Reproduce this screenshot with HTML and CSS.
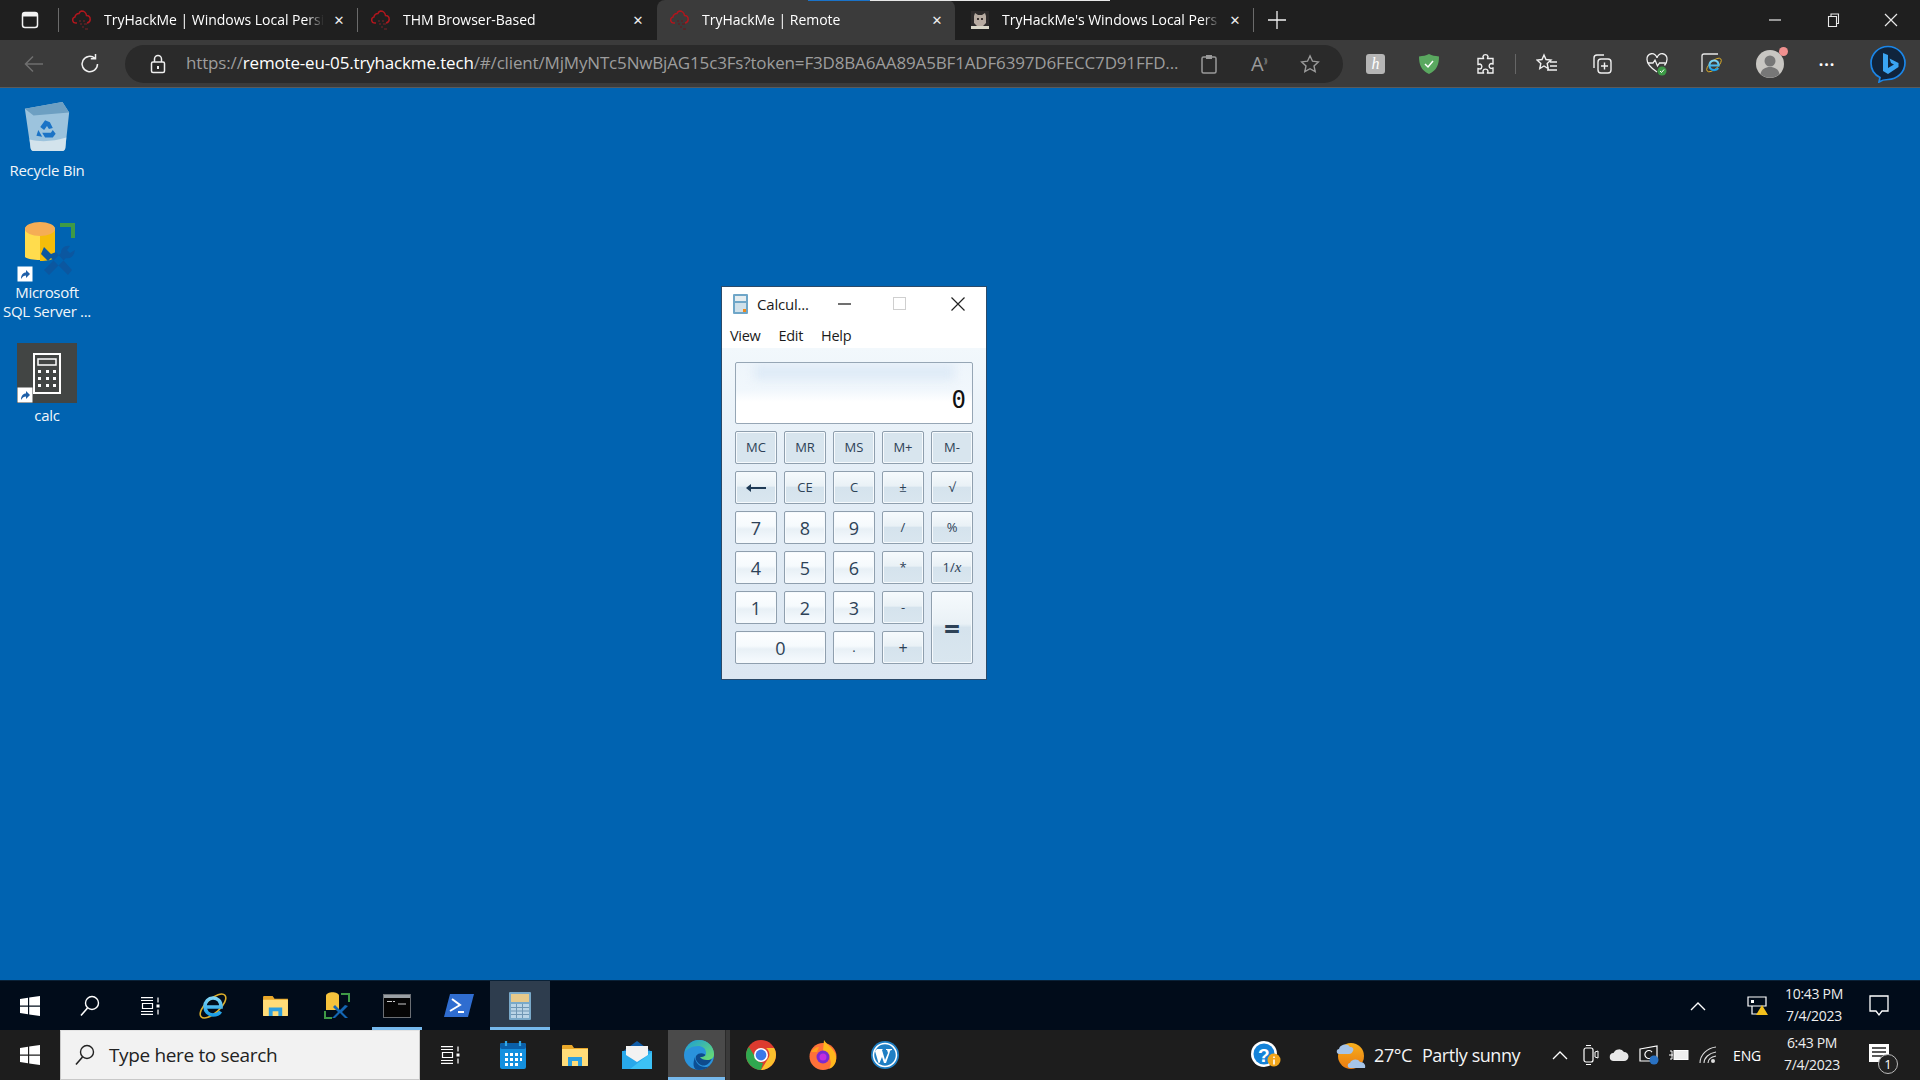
FILE: index.html
```html
<!DOCTYPE html>
<html lang="en">
<head>
<meta charset="utf-8">
<title>TryHackMe | Remote</title>
<link rel="stylesheet" href="styles.css">
</head>
<body>
<svg class="defs" width="0" height="0" aria-hidden="true">
  <defs>
    <linearGradient id="edgeTop" x1="0" y1="0" x2="1" y2="1"><stop offset="0" stop-color="#1a9cd8"/><stop offset="1" stop-color="#6fe06a"/></linearGradient>
    <linearGradient id="sunG" x1="0" y1="0" x2="0" y2="1"><stop offset="0" stop-color="#f7b01e"/><stop offset="1" stop-color="#ea7a10"/></linearGradient>
    <linearGradient id="ieG" x1="0" y1="0" x2="0" y2="1"><stop offset="0" stop-color="#7fd6f7"/><stop offset="1" stop-color="#1b9ee6"/></linearGradient>
    <symbol id="thm" viewBox="0 0 20 20">
      <path d="M5 13H3.500a3 3 0 0 1-.6-5.900A4.500 4.500 0 0 1 7 3.500 4 4 0 0 1 9.500 1a5 5 0 0 1 5 4.500 3.800 3.800 0 0 1 3.700 3.700A3.800 3.800 0 0 1 15 13" fill="none" stroke="#b0161d" stroke-width="1.500"/>
      <path d="M7 11h2M11 11h2M8 14h2M12 14h3M10 17h2M13 19h3" stroke="#5c2226" stroke-width="1.400"/>
    </symbol>
    <symbol id="winlogo" viewBox="0 0 20 20">
      <path d="M0 3l8-1.200V9.500H0zM9.200 1.600 20 0v9.500H9.200zM0 10.700h8v7.500l-8-1.200zM9.200 10.700H20V20L9.200 18.400z" fill="#fff"/>
    </symbol>
    <symbol id="taskview" viewBox="0 0 20 18">
      <path d="M1 .6h12M1 3.500h12M2.500 6.500h10v5h-10zM1 14.500h12M1 17.400h12M18 .6v4.800M18 12.500v5" fill="none" stroke="#fff" stroke-width="1.200"/>
      <rect x="16.500" y="7.500" width="3" height="3" fill="#fff"/>
    </symbol>
    <symbol id="folder" viewBox="0 0 28 23">
      <path d="M1 2a1 1 0 0 1 1-1h9l2 3h14v18H1z" fill="#e9a82a"/>
      <path d="M1 5h26v16a1 1 0 0 1-1 1H2a1 1 0 0 1-1-1z" fill="#ffdc78"/>
      <path d="M7 22v-9h14v9h-4v-5h-6v5z" fill="#2b9fe0"/>
    </symbol>
    <symbol id="ie" viewBox="0 0 28 28">
      <ellipse cx="14" cy="14" rx="16" ry="7" transform="rotate(-42 14 14)" fill="none" stroke="#dfb02a" stroke-width="1.600"/>
      <path d="M7 15h15c0-6-3.500-9-8-9s-8 3.500-8 8.500S9.500 23 14 23c3 0 6-1.200 7.500-3.500" fill="none" stroke="url(#ieG)" stroke-width="3.600"/>
    </symbol>
    <symbol id="shortcut" viewBox="0 0 16 16">
      <rect x=".5" y=".5" width="15" height="15" fill="#fff"/>
      <path d="M4 13c0-4 2-6.500 5-6.500V4l4 4-4 4V9.500c-2 0-3.500 1-5 3.500z" fill="#1d5fa8"/>
    </symbol>
  </defs>
</svg>

<header class="tabbar">
  <button class="chrome-btn sidebar-btn" aria-label="Tab actions">
    <svg width="18" height="18" viewBox="0 0 18 18"><rect x="1.500" y="1.500" width="15" height="15" rx="2.500" fill="none" stroke="#f2f2f2" stroke-width="1.500"/><path d="M2 2h14v3.500H2z" fill="#f2f2f2"/></svg>
  </button>
  <span class="tab-sep"></span>
  <div class="tab">
    <svg class="favicon"><use href="#thm"/></svg>
    <span class="tab-title">TryHackMe | Windows Local Persi</span>
    <span class="tab-close">✕</span>
  </div>
  <span class="tab-sep"></span>
  <div class="tab">
    <svg class="favicon"><use href="#thm"/></svg>
    <span class="tab-title">THM Browser-Based</span>
    <span class="tab-close">✕</span>
  </div>
  <div class="tab tab-active">
    <svg class="favicon"><use href="#thm"/></svg>
    <span class="tab-title">TryHackMe | Remote</span>
    <span class="tab-close">✕</span>
  </div>
  <div class="tab tab-last">
    <svg class="favicon favicon-cat" viewBox="0 0 18 18"><rect width="18" height="18" fill="#2d2a2a"/><path d="M3 5l1-3 3 2h4l3-2 1 3v7l-3 3H6l-3-3z" fill="#b7aaa0"/><path d="M6 7h2v2H6zM10 7h2v2h-2z" fill="#3b3230"/><path d="M0 15h18v3H0z" fill="#d9d6c8"/></svg>
    <span class="tab-title">TryHackMe's Windows Local Pers</span>
    <span class="tab-close">✕</span>
  </div>
  <span class="tab-sep"></span>
  <button class="chrome-btn new-tab" aria-label="New tab">
    <svg width="18" height="18" viewBox="0 0 18 18"><path d="M9 0v18M0 9h18" stroke="#f2f2f2" stroke-width="1.300"/></svg>
  </button>
  <div class="win-controls">
    <svg width="14" height="14" viewBox="0 0 14 14"><path d="M1 7h12" stroke="#e8e8e8" stroke-width="1.200"/></svg>
    <svg width="14" height="14" viewBox="0 0 14 14"><path d="M2.500 3.500h8v10h-8zM5 3.500V1h7.500v9.500h-2" fill="none" stroke="#e8e8e8" stroke-width="1.100"/></svg>
    <svg width="14" height="14" viewBox="0 0 14 14"><path d="M1 1l12 12M13 1 1 13" stroke="#e8e8e8" stroke-width="1.200"/></svg>
  </div>
  <div class="remote-strip"><span class="strip-blue"></span><span class="strip-white"></span></div>
</header>

<nav class="toolbar">
  <svg class="nav-back" width="20" height="20" viewBox="0 0 20 20"><path d="M19 10H2M9 2.500 1.500 10 9 17.500" fill="none" stroke="#6f6f6f" stroke-width="1.500"/></svg>
  <svg class="nav-reload" width="22" height="22" viewBox="0 0 22 22"><path d="M18.500 11a7.700 7.700 0 1 1-2.600-5.800M16.500 1v4.700h-4.700" fill="none" stroke="#f0f0f0" stroke-width="1.500"/></svg>
  <div class="address">
    <svg class="lock" width="16" height="20" viewBox="0 0 16 20"><rect x="1.500" y="8" width="13" height="10.500" rx="1.500" fill="none" stroke="#f0f0f0" stroke-width="1.500"/><path d="M4.500 8V5a3.500 3.500 0 0 1 7 0v3" fill="none" stroke="#f0f0f0" stroke-width="1.500"/><rect x="7" y="12" width="2" height="3" fill="#f0f0f0"/></svg>
    <span class="url"><span class="dim">https://</span><span class="host">remote-eu-05.tryhackme.tech</span><span class="dim">/#/client/MjMyNTc5NwBjAG15c3Fs?token=F3D8BA6AA89A5BF1ADF6397D6FECC7D91FFD...</span></span>
    <div class="addr-icons">
      <svg width="18" height="20" viewBox="0 0 18 20"><rect x="2" y="3" width="14" height="16" rx="1.500" fill="none" stroke="#9a9a9a" stroke-width="1.500"/><rect x="6" y="1" width="6" height="4" fill="#9a9a9a"/></svg>
      <span class="read-aloud">A<sup>))</sup></span>
      <svg width="20" height="20" viewBox="0 0 20 20"><path d="M10 1.800l2.500 5.400 5.800.7-4.300 4 1.200 5.800-5.200-3-5.200 3 1.200-5.800-4.300-4 5.800-.7z" fill="none" stroke="#9a9a9a" stroke-width="1.400"/></svg>
    </div>
  </div>
  <div class="ext-icons">
    <span class="ext-k">h</span>
    <svg class="ext-shield" width="20" height="20" viewBox="0 0 20 20"><path d="M10 0c3 1.500 6 2 10 2.500C20 10 18 16.500 10 20 2 16.500 0 10 0 2.500 4 2 7 1.500 10 0z" fill="#5aa860"/><path d="M6 10l3 3 5-6" fill="none" stroke="#fff" stroke-width="1.500"/></svg>
    <svg class="ext-puzzle" width="24" height="22" viewBox="0 0 24 22"><path d="M10 3.500a2.600 2.600 0 0 1 5 0c0 1-.6 1.500-.5 2H20v5.500c-.5 0-1-.6-2-.5a2.600 2.600 0 0 0 0 5c1 0 1.500-.5 2-.5V20h-5.500c0-.6.500-1 .5-2a2.600 2.600 0 0 0-5 0c0 1 .5 1.400.5 2H5v-4.500c.6 0 1 .5 2 .5a2.600 2.600 0 0 0 0-5c-1 0-1.400.5-2 .5V5.500h5.500c0-.5-.5-1-.5-2z" fill="none" stroke="#f0f0f0" stroke-width="1.400"/></svg>
    <span class="tool-sep"></span>
    <svg class="ext-fav" width="22" height="22" viewBox="0 0 22 22"><path d="M8 2l2 4.500 5 .5-3.800 3.500 1 5L8 13l-4.200 2.500 1-5L1 7l5-.5zM14 9h7M14 13h7M11 17h10" fill="none" stroke="#f0f0f0" stroke-width="1.400"/></svg>
    <svg width="22" height="22" viewBox="0 0 22 22"><path d="M3 15V5a3 3 0 0 1 3-3h7" fill="none" stroke="#f0f0f0" stroke-width="1.400"/><rect x="7" y="6" width="13" height="14" rx="3" fill="none" stroke="#f0f0f0" stroke-width="1.400"/><path d="M13.500 9.500v7M10 13h7" stroke="#f0f0f0" stroke-width="1.400"/></svg>
    <svg width="22" height="24" viewBox="0 0 22 24"><path d="M11 20C5 16 1 12 1 7.500a4.800 4.800 0 0 1 10-1.500 4.800 4.800 0 0 1 10 1.500c0 2-1 4-2.500 6" fill="none" stroke="#f0f0f0" stroke-width="1.300"/><path d="M2 11h5l2-3 2.500 6 2-3h6" fill="none" stroke="#f0f0f0" stroke-width="1.300"/><circle cx="16" cy="19" r="4.500" fill="#3c9a46"/><path d="M14 19l1.500 1.500L18 17.500" fill="none" stroke="#fff"/></svg>
    <span class="ext-ie">
      <svg width="20" height="22" viewBox="0 0 20 22"><path d="M1 19V3a2 2 0 0 1 2-2h14" fill="none" stroke="#e8e8e8" stroke-width="1.300"/></svg>
      <svg class="ext-ie-e" width="16" height="16"><use href="#ie"/></svg>
    </span>
    <span class="profile"><svg width="28" height="28" viewBox="0 0 28 28"><circle cx="14" cy="14" r="14" fill="#c8c6c2"/><circle cx="14" cy="11" r="5.500" fill="#777"/><path d="M4.500 24c1-5 5-7 9.500-7s8.500 2 9.500 7c-5 5-14 5-19 0z" fill="#777"/></svg><span class="profile-dot"></span></span>
    <span class="more">···</span>
    <svg class="bing" width="38" height="38" viewBox="0 0 38 38"><path d="M19 1.500c9.500 0 17 7.500 17 16.500S28 34.500 19 34.500c-3 0-6 .5-9 2.500l1-4.500C5 29.500 2 24.500 2 18 2 9 9.500 1.500 19 1.500z" fill="#10243c" stroke="#1b86e8" stroke-width="1.700"/><path d="M14 8l5 2v13l6-3.500-3-1.500-1.500-4.500 9 4.500v4L19 29l-5-3z" fill="#3aa5f3"/></svg>
  </div>
</nav>

<main class="desktop">
  <div class="desk-icon icon-bin">
    <svg width="48" height="52" viewBox="0 0 48 54"><path d="M1 8 40 1l7 11-4 37a4 4 0 0 1-4 3H11a4 4 0 0 1-4-3z" fill="#9cc3dd"/><path d="M1 8 40 1l7 11-37 3z" fill="#6d9fc2"/><path d="M6 40c12 3 25 2 38-2l-1 11a4 4 0 0 1-4 3H11a4 4 0 0 1-4-3z" fill="#d3e3ec"/><path d="M17 27l5-7 5 2 3 6-4 1-2-3-3 4zM19 33h9l2-3 3 4-3 4h-8zM15 30l4 7-6-1z" fill="#1b73c6"/></svg>
    <span class="desk-label">Recycle Bin</span>
  </div>
  <div class="desk-icon icon-sql">
    <span class="art">
      <svg width="60" height="60" viewBox="0 0 60 60"><path d="M8 7c0-7 30-7 30 0v28c-4 4-26 4-30 0z" fill="#ffdc4d"/><path d="M23 6v33c7 0 13-1 15-4V7c0-2-8-3-15-1z" fill="#f5bd0a"/><ellipse cx="23" cy="7" rx="15" ry="7" fill="#f5ad55"/><path d="M43 1h15v15h-4V5H43z" fill="#3f9a46"/><path d="M27 25l7 7 5-2 16 18-4 5-17-17-3 3-7-7zM53 24c-5-1-9 2-9 7L27 48l5 5 17-17c5 1 8-2 9-8l-5 3-3-3z" fill="#0b57a0"/></svg>
      <svg class="short"><use href="#shortcut"/></svg>
    </span>
    <span class="desk-label">Microsoft<br>SQL Server ...</span>
  </div>
  <div class="desk-icon icon-calc">
    <span class="art art-calc">
      <svg width="60" height="60" viewBox="0 0 60 60"><rect width="60" height="60" fill="#424544"/><rect x="17" y="11" width="26" height="39" fill="none" stroke="#fff" stroke-width="2"/><rect x="21" y="16" width="18" height="6" fill="none" stroke="#fff" stroke-width="1.500"/><path d="M21 27h3v3h-3zM29 27h3v3h-3zM36 27h3v3h-3zM21 34h3v3h-3zM29 34h3v3h-3zM36 34h3v3h-3zM21 41h3v3h-3zM29 41h3v3h-3zM36 41h3v3h-3z" fill="#fff"/></svg>
      <svg class="short"><use href="#shortcut"/></svg>
    </span>
    <span class="desk-label">calc</span>
  </div>

  <section class="calc">
    <div class="calc-title">
      <svg width="16" height="20" viewBox="0 0 16 20"><rect width="15" height="20" rx="1" fill="#6fa6c8"/><rect x="2" y="2" width="11" height="5" fill="#e6edf0"/><path d="M2 9h11v9H2z" fill="#cfe0ea"/><path d="M10 15h3v3h-3z" fill="#ee8a1d"/></svg>
      <span class="calc-name">Calcul...</span>
      <svg class="ctl ctl-min" width="14" height="14" viewBox="0 0 14 14"><path d="M0 7h13" stroke="#222" stroke-width="1.300"/></svg>
      <svg class="ctl ctl-max" width="14" height="14" viewBox="0 0 14 14"><rect x=".5" y=".5" width="12" height="12" fill="none" stroke="#cfcfcf"/></svg>
      <svg class="ctl ctl-close" width="14" height="14" viewBox="0 0 14 14"><path d="M.5.500l13 13M13.500.500l-13 13" stroke="#222" stroke-width="1.200"/></svg>
    </div>
    <div class="calc-menu"><span>View</span><span>Edit</span><span>Help</span></div>
    <div class="calc-body">
      <div class="calc-display"><span class="calc-haze"></span><span class="calc-value">0</span></div>
      <div class="calc-keys">
        <button class="key fn small">MC</button><button class="key fn small">MR</button><button class="key fn small">MS</button><button class="key fn small">M+</button><button class="key fn small">M-</button>
        <button class="key op arrow" aria-label="Backspace"><svg width="20" height="8" viewBox="0 0 20 8"><path d="M0 4l5-4v3h15v2H5v3z" fill="#1f3a55"/></svg></button><button class="key op small">CE</button><button class="key op small">C</button><button class="key op small">±</button><button class="key op small">√</button>
        <button class="key num">7</button><button class="key num">8</button><button class="key num">9</button><button class="key op small">/</button><button class="key op small">%</button>
        <button class="key num">4</button><button class="key num">5</button><button class="key num">6</button><button class="key op small">*</button><button class="key op small">1/<i>x</i></button>
        <button class="key num">1</button><button class="key num">2</button><button class="key num">3</button><button class="key op small">-</button><button class="key op equals">=</button>
        <button class="key num zero">0</button><button class="key num small">.</button><button class="key op plus">+</button>
      </div>
    </div>
  </section>
</main>

<footer class="taskbar remote-bar">
  <svg class="tb-start"><use href="#winlogo"/></svg>
  <svg class="tb-search" width="22" height="22" viewBox="0 0 22 22"><circle cx="13" cy="8" r="6.500" fill="none" stroke="#fff" stroke-width="1.400"/><path d="M8.500 13 2 20.500" stroke="#fff" stroke-width="1.600"/></svg>
  <svg class="tb-tv"><use href="#taskview"/></svg>
  <span class="slot"><svg width="28" height="28"><use href="#ie"/></svg></span>
  <span class="slot"><svg width="27" height="22"><use href="#folder"/></svg></span>
  <span class="slot">
    <svg width="28" height="28" viewBox="0 0 28 28"><path d="M3 4c0-5 13-5 13 0v14H3z" fill="#f6c33c"/><path d="M18 1h9v9h-2V3h-7zM1 19v8h8v-2H3v-6z" fill="#3f9a46"/><path d="M12 13l5 5 5-5 3 1-6 6 6 6h-3l-5-5-5 5h-3l6-6-5-5z" fill="#1466b3"/></svg>
  </span>
  <span class="slot slot-run">
    <svg width="28" height="24" viewBox="0 0 28 24"><rect x=".5" y=".5" width="27" height="23" fill="#050505" stroke="#6b6f74"/><rect x="1" y="1" width="26" height="3" fill="#9aa0a5"/><path d="M4 7.500h5M10 7.500h2M15 10h8" stroke="#ccc"/></svg>
  </span>
  <span class="slot">
    <svg width="30" height="23" viewBox="0 0 30 23"><path d="M6 0h24l-6 23H0z" fill="#2f6dd0"/><path d="M8 5l8 6-10 6M14 18h6" fill="none" stroke="#fff" stroke-width="2"/></svg>
  </span>
  <span class="slot slot-active">
    <svg width="22" height="28" viewBox="0 0 22 28"><rect width="22" height="28" rx="1" fill="#79a9c9"/><rect x="2" y="2" width="18" height="8" fill="#e7c98a"/><rect x="2" y="12" width="18" height="14" fill="#b9d4e6"/><path d="M2 15.500h18M2 19h18M2 22.500h18M7.500 12v14M13.500 12v14" stroke="#6f96b3"/></svg>
  </span>
  <span class="spacer"></span>
  <svg class="tray-chevron" width="16" height="10" viewBox="0 0 16 10"><path d="M1 9l7-7 7 7" fill="none" stroke="#fff" stroke-width="1.400"/></svg>
  <svg class="tray-net" width="22" height="20" viewBox="0 0 22 20"><path d="M1 1h18v9H1zM5 10v8h6" fill="none" stroke="#fff" stroke-width="1.200"/><path d="M4 4h3v3H4z" fill="#fff"/><path d="M15 9l6 10H9z" fill="#f3c01c"/></svg>
  <div class="clock"><span>10:43 PM</span><span>7/4/2023</span></div>
  <svg class="notif" width="20" height="22" viewBox="0 0 20 22"><path d="M1 1h18v15h-6l-3 4-3-4H1z" fill="none" stroke="#fff" stroke-width="1.300"/></svg>
</footer>

<footer class="taskbar host-bar">
  <svg class="tb-start"><use href="#winlogo"/></svg>
  <div class="searchbox">
    <svg width="22" height="22" viewBox="0 0 22 22"><circle cx="13" cy="8" r="6.500" fill="none" stroke="#222" stroke-width="1.400"/><path d="M8.500 13 2 20.500" stroke="#222" stroke-width="1.600"/></svg>
    <span>Type here to search</span>
  </div>
  <svg class="tb-tv host-tv"><use href="#taskview"/></svg>
  <span class="hslot">
    <svg width="26" height="28" viewBox="0 0 26 28"><rect y="2" width="26" height="26" rx="2" fill="#1490df"/><rect y="2" width="26" height="6" rx="2" fill="#0a5fa8"/><path d="M6 0v5M20 0v5" stroke="#33a8e6" stroke-width="2.200"/><path d="M5 12h3v3H5zM10 12h3v3h-3zM15 12h3v3h-3zM20 12h2v3h-2zM5 17h3v3H5zM10 17h3v3h-3zM15 17h3v3h-3zM20 17h2v3h-2zM10 22h3v3h-3zM15 22h3v3h-3zM5 22h3v3H5z" fill="#fff"/></svg>
  </span>
  <span class="hslot"><svg width="28" height="23"><use href="#folder"/></svg></span>
  <span class="hslot">
    <svg width="30" height="28" viewBox="0 0 30 28"><path d="M15 0l15 11H0z" fill="#0f5ca8"/><path d="M0 10h30v18H0z" fill="#28a8ea"/><path d="M4 5h22v9l-11 7-11-7z" fill="#f2f2f2"/><path d="M30 11v17H8z" fill="#50d9ff" opacity=".5"/></svg>
  </span>
  <span class="hslot hslot-active">
    <svg width="30" height="30" viewBox="0 0 30 30"><circle cx="15" cy="15" r="15" fill="#2a93dc"/><path d="M11 17c0 6 5 10 10 10 2 0 3.500-.5 5-1.500C23 28.500 19 30 15 30 8 30 9 22 11 17z" fill="#0c4f94"/><path d="M12 16c3-4 9-3 10 0 1.200 3 4 4 6 2-2 6-7 9-11 7-4-2-6-6-5-9z" fill="#0e4a8c"/><path d="M1 12C3 4 9 0 15 0c8 0 15 6 15 14 0 4-3 6-7 6-3 0-6-1-7-3 5 0 6-2 6-4C22 8 18 6 14 6 8 6 3 9 1 12z" fill="url(#edgeTop)"/></svg>
    <span class="hslot-edge"></span>
  </span>
  <span class="hslot">
    <svg width="30" height="30" viewBox="0 0 30 30"><circle cx="15" cy="15" r="15" fill="#dd3b2f"/><path d="M15 30C7 30 0 23 0 15c0-3 1-6 3-8l8 13c1 2 4 3 6 3z" fill="#2fa84f"/><path d="M15 8h13c1.500 2 2 4.500 2 7 0 8-7 15-15 15l8-13c1-3 0-7-3-9z" fill="#fbc02d"/><circle cx="15" cy="15" r="7" fill="#fff"/><circle cx="15" cy="15" r="5.400" fill="#3b78e7"/></svg>
  </span>
  <span class="hslot">
    <svg width="28" height="30" viewBox="0 0 28 30"><circle cx="14" cy="16.500" r="13.500" fill="#ff7139"/><path d="M15 0c3 5 8 7 11 13 3 7 0 14-6 16 4-6 1-14-6-18z" fill="#ffb81c"/><circle cx="14" cy="17" r="6.500" fill="#7b2bd0"/><circle cx="14" cy="17" r="3.500" fill="#c22de0"/><path d="M2 12c2-3 5-5 8-5l-2 5z" fill="#ffa21c"/></svg>
  </span>
  <span class="hslot">
    <svg width="28" height="28" viewBox="0 0 28 28"><circle cx="14" cy="14" r="14" fill="#1f7fc4"/><circle cx="14" cy="14" r="11.500" fill="none" stroke="#fff" stroke-width="1.500"/><path d="M6 8h6l-1 1 3 10 3-7-1-3h-1V8h6v1c-2 0-2 1-2.500 3L15 22h-2l-2-6-2.500 6h-1L4 10z" fill="#fff"/></svg>
  </span>
  <span class="spacer"></span>
  <svg class="help-ic" width="30" height="28" viewBox="0 0 30 28"><circle cx="13" cy="13" r="13" fill="#fff"/><circle cx="13" cy="13" r="10.500" fill="#1482d8"/><text class="help-q" x="7" y="21">?</text><circle cx="23" cy="19" r="6.500" fill="#f1a51a"/><path d="M23 15.500v1.500M23 18.500v5" stroke="#fff" stroke-width="1.600"/></svg>
  <svg class="weather-ic" width="30" height="28" viewBox="0 0 30 28"><circle cx="15" cy="15" r="13" fill="url(#sunG)"/><path d="M3 13c-3 0-3-5 0-5 1-5 9-6 11-2 3 0 4 2 3 4-1 2-2 3-4 3z" fill="#a6c4e8"/><path d="M14 27c-3 0-3-5 0-5 1-4 8-5 10-1 4 0 6 3 5 6z" fill="#a6c4e8"/></svg>
  <span class="weather-text"><span>27°C</span><span>Partly sunny</span></span>
  <div class="tray">
    <svg class="tray-up" width="16" height="10" viewBox="0 0 16 10"><path d="M1 9l7-7 7 7" fill="none" stroke="#fff" stroke-width="1.300"/></svg>
    <svg width="16" height="20" viewBox="0 0 16 20"><rect x="1" y="3" width="9" height="14" rx="2" fill="none" stroke="#fff" stroke-width="1.200"/><path d="M3 .5h5M3 19.500h5" stroke="#fff"/><path d="M12 7l3-1v7l-3-1z" fill="none" stroke="#fff"/></svg>
    <svg width="20" height="14" viewBox="0 0 20 14"><path d="M5 13a4 4 0 0 1-.5-8A6 6 0 0 1 15 4a4.500 4.500 0 0 1 0 9z" fill="#e8e8e8"/></svg>
    <svg width="20" height="20" viewBox="0 0 20 20"><path d="M1 4 18 1v15H1z" fill="none" stroke="#fff" stroke-width="1.200"/><path d="M13 7a4 4 0 1 0 0 5" fill="none" stroke="#fff" stroke-width="1.200"/><circle cx="15" cy="15" r="4.500" fill="#2a72c3"/></svg>
    <svg width="20" height="14" viewBox="0 0 20 14"><rect x="5" y="2.500" width="14" height="9" fill="#f0f0f0" stroke="#fff"/><path d="M0 7h4M1 3h2v8H1" fill="none" stroke="#fff"/></svg>
    <svg width="18" height="18" viewBox="0 0 18 18"><path d="M1 17C1 9 8 2 17 1M5 17c0-5 5-10 12-11M9 17c0-3 3-6 8-7" fill="none" stroke="#ddd" stroke-width="1.100"/><circle cx="14" cy="15" r="2" fill="#ddd"/></svg>
    <span class="lang">ENG</span>
  </div>
  <div class="clock"><span>6:43 PM</span><span>7/4/2023</span></div>
  <span class="action">
    <svg width="20" height="18" viewBox="0 0 20 18"><path d="M0 0h20v18H0z" fill="#fff"/><path d="M3 4h14M3 8h14M3 12h14" stroke="#222" stroke-width="1.300"/></svg>
    <span class="action-count">1</span>
  </span>
</footer>
</body>
</html>
```

FILE: styles.css
```css
* { box-sizing: border-box; }
html, body { margin: 0; padding: 0; height: 100%; overflow: hidden; }
body {
  width: 1920px;
  height: 1080px;
  display: flex;
  flex-direction: column;
  font-family: "Open Sans", "Noto Sans", sans-serif;
  background: #0063b1;
  color: #fff;
}
svg { display: block; flex: none; }
.defs { position: absolute; }
button { font: inherit; border: 0; padding: 0; background: none; }

/* tab strip */
.tabbar {
  position: relative;
  height: 40px;
  background: #1f1f1f;
  display: flex;
  align-items: center;
  padding-left: 21px;
  flex: none;
}
.chrome-btn { display: flex; align-items: center; justify-content: center; }
.sidebar-btn { width: 18px; height: 18px; margin-right: 19px; }
.tab-sep { width: 1px; height: 24px; background: #6b6b6b; flex: none; }
.tab {
  height: 40px;
  width: 298px;
  display: flex;
  align-items: center;
  padding: 0 11px 0 13px;
  flex: none;
  font-size: 14px;
  letter-spacing: -.02px;
}
.tab-active {
  background: #3b3b3b;
  border-radius: 8px 8px 0 0;
  margin-left: 1px;
}
.tab-last { width: 298px; padding-left: 16px; }
.favicon { width: 20px; height: 20px; margin-right: 12px; }
.favicon-cat { width: 18px; height: 18px; margin-right: 13px; }
.tab-title {
  flex: 1;
  min-width: 0;
  margin-top: -2px;
  white-space: nowrap;
  overflow: hidden;
  -webkit-mask-image: linear-gradient(90deg, #000 92%, transparent);
  mask-image: linear-gradient(90deg, #000 92%, transparent);
}
.tab-close { width: 14px; margin-left: 8px; font-size: 13px; text-align: center; color: #ededed; font-family: "DejaVu Sans", sans-serif; letter-spacing: 0; }
.new-tab { margin-left: 14px; }
.win-controls {
  margin-left: auto;
  display: flex;
  gap: 44px;
  padding-right: 22px;
}
.remote-strip { position: absolute; top: 0; left: 808px; display: flex; height: 1px; }
.strip-blue { width: 62px; background: #1a73c9; }
.strip-white { width: 240px; background: #e8e8e8; }

/* toolbar */
.toolbar {
  height: 48px;
  flex: none;
  background: #3b3b3b;
  border-bottom: 1px solid #5a5a5a;
  display: flex;
  align-items: center;
  padding: 0 0 0 24px;
}
.nav-back { margin-right: 35px; }
.nav-reload { margin-right: 24px; }
.address {
  width: 1218px;
  height: 38px;
  background: #2a2a2a;
  border-radius: 19px;
  display: flex;
  align-items: center;
  padding: 0 23px 0 25px;
  flex: none;
}
.lock { margin-right: 20px; }
.url { font-size: 17px; letter-spacing: -.16px; white-space: nowrap; flex: 1; margin-top: -2px; min-width: 0; }
.dim { color: #9d9d9d; }
.host { color: #fff; }
.addr-icons { display: flex; align-items: center; gap: 29px; color: #9a9a9a; }
.read-aloud { font-size: 20px; width: 24px; padding-left: 4px; line-height: 1; white-space: nowrap; }
.read-aloud sup { font-size: 8px; letter-spacing: -1px; }
.ext-icons { display: flex; align-items: center; margin-left: 23px; gap: 33px; }
.ext-k {
  width: 19px; height: 20px; border-radius: 3px;
  background: #b5b5b5; color: #fff;
  font: italic 16px "Liberation Serif", serif;
  display: flex; align-items: center; justify-content: center;
}
.ext-shield, .ext-puzzle { margin-left: 1px; }
.tool-sep { width: 1px; height: 20px; background: #666; margin-left: -15px; }
.ext-fav { margin-left: -13px; }
.ext-ie { position: relative; display: block; width: 20px; height: 22px; }
.ext-ie-e { position: absolute; left: 5px; top: 4px; }
.profile { position: relative; display: block; width: 28px; height: 28px; margin-left: 2px; }
.profile-dot { position: absolute; top: -3px; right: -4px; width: 9px; height: 9px; border-radius: 50%; background: #f0908f; }
.more { font-size: 16px; font-weight: 700; letter-spacing: 1px; width: 18px; margin-left: 1px; text-align: center; white-space: nowrap; }

/* desktop: free canvas */
.desktop {
  position: relative;
  flex: 1;
  background: #0063b1;
  min-height: 0;
}
.desk-icon {
  position: absolute;
  left: 0;
  width: 94px;
  display: flex;
  flex-direction: column;
  align-items: center;
  font-size: 15px;
  letter-spacing: -.3px;
}
.icon-bin { top: 13px; }
.icon-sql { top: 134px; }
.icon-calc { top: 255px; }
.desk-label { text-align: center; line-height: 18.500px; color: #f2f6fa; white-space: nowrap; }
.icon-bin .desk-label { margin-top: 8px; }
.icon-sql .desk-label { margin-top: 1px; }
.icon-calc .desk-label { margin-top: 3px; }
.art { position: relative; display: block; width: 60px; height: 60px; }
.short { position: absolute; left: 0; bottom: 0; width: 16px; height: 16px; }

/* calculator window */
.calc {
  position: absolute;
  left: 721px;
  top: 198px;
  width: 266px;
  height: 394px;
  background: #fff;
  border: 1px solid #2a4a6a;
  color: #1b1b1b;
  display: flex;
  flex-direction: column;
}
.calc-title {
  height: 32px;
  display: flex;
  align-items: center;
  padding: 1px 0 0 11px;
  font-size: 15px;
  flex: none;
}
.calc-name { margin-left: 8px; width: 70px; letter-spacing: -.2px; white-space: nowrap; }
.ctl-min { margin-left: 11px; }
.ctl-max { margin-left: 41px; }
.ctl-close { margin-left: 44px; }
.calc-menu {
  height: 29px;
  display: flex;
  gap: 18px;
  align-items: center;
  padding: 4px 0 0 8px;
  font-size: 14.500px;
  letter-spacing: -.3px;
  flex: none;
}
.calc-body {
  flex: 1;
  background: linear-gradient(180deg, #f2f8fc 0, #e3edf6 40%, #dce7f2 100%);
  padding: 14px 13px 0;
}
.calc-display {
  position: relative;
  height: 62px;
  border: 1px solid #96a6b5;
  border-radius: 2px;
  background: linear-gradient(180deg, #eef5fb 0, #f1f7fc 45%, #ffffff 65%);
  display: flex;
  align-items: flex-end;
  justify-content: flex-end;
  padding: 0 6px 11px 0;
  margin-bottom: 7px;
  overflow: hidden;
}
.calc-haze { position: absolute; left: 18px; right: 18px; top: 1px; height: 16px; background: #dfebf7; filter: blur(5px); }
.calc-value { position: relative; font: 24px/1 "DejaVu Sans Mono", monospace; color: #111; }
.calc-keys {
  display: grid;
  grid-template-columns: repeat(5, 42px);
  grid-auto-rows: 33px;
  gap: 7px;
}
.key {
  border: 1px solid #8f9fae;
  border-radius: 2px;
  box-shadow: inset 0 0 0 1px #f6fafd;
  color: #2d4257;
  display: flex;
  align-items: center;
  justify-content: center;
  line-height: 1;
  font-family: "Open Sans", sans-serif;
}
.num {
  background: linear-gradient(180deg, #fdfeff 0, #f6fafd 45%, #e8f0f6 55%, #f7fbfe 100%);
  font-size: 18px;
}
.op, .fn { font-size: 18px; }
.op { background: linear-gradient(180deg, #f6fafd 0, #e9f1f6 45%, #d5e3ed 50%, #d9e6ef 100%); }
.fn { background: #d8e5ee; }
.small { font-size: 13px; }
.small i { font-family: "Liberation Serif", serif; font-size: 15px; }
.equals { grid-row: span 2; font-size: 28px; font-weight: 700; }
.plus { font-size: 16px; }
.zero { grid-column: span 2; }

/* taskbars */
.taskbar {
  flex: none;
  height: 50px;
  display: flex;
  align-items: center;
}
.remote-bar { background: #010c1a; border-top: 1px solid #0a2238; }
.host-bar { background: #1d1d1d; }
.tb-start { width: 20px; height: 20px; margin-left: 20px; }
.tb-search { margin-left: 39px; }
.tb-tv { width: 20px; height: 18px; margin-left: 39px; }
.host-tv { margin-left: 20px; }
.slot {
  width: 62px;
  height: 49px;
  display: flex;
  align-items: center;
  justify-content: center;
}
.remote-bar .tb-tv + .slot { margin-left: 22px; }
.slot-run { border-bottom: 3px solid #76b9ed; padding-top: 3px; width: 50px; margin: 0 6px 0 4px; }
.slot-active { width: 60px; background: #2e3d4e; border-bottom: 3px solid #76b9ed; padding-top: 3px; }
.spacer { flex: 1; }
.tray-chevron { margin-right: 41px; }
.tray-net { margin-right: 5px; }
.clock {
  width: 80px;
  display: flex;
  flex-direction: column;
  align-items: center;
  gap: 4px;
  font-size: 14px;
  line-height: 18px;
  letter-spacing: -.3px;
  color: #eee;
  margin-top: -2px;
}
.notif { margin: 0 31px 0 15px; }
.searchbox {
  width: 360px;
  height: 50px;
  margin-left: 20px;
  background: #f2f2f2;
  border: 1px solid #c8c8c8;
  border-top-color: #e4e4e4;
  display: flex;
  align-items: center;
  gap: 13px;
  padding-left: 13px;
  color: #222;
  font-size: 19px;
  letter-spacing: -.35px;
}
.hslot {
  position: relative;
  width: 62px;
  height: 50px;
  display: flex;
  align-items: center;
  justify-content: center;
  flex: none;
}
.host-tv + .hslot { margin-left: 22px; }
.hslot-active { background: #4a4a4a; border-bottom: 3px solid #76b9ed; padding-top: 3px; }
.hslot-edge { position: absolute; right: 0; top: 0; bottom: -3px; width: 5px; background: #3a3a3a; border-left: 1px solid #2a2a2a; }
.help-q { font: bold 19px "Liberation Sans", sans-serif; fill: #fff; }
.help-ic { margin-right: 55px; }
.weather-ic { margin-right: 8px; }
.weather-text { display: flex; gap: 10px; font-size: 18px; letter-spacing: -.45px; color: #f4f4f4; white-space: nowrap; }
.tray { display: flex; align-items: center; gap: 10px; margin-left: 32px; margin-right: 11px; }
.tray-up { margin-right: 5px; }
.lang { font-size: 14px; letter-spacing: -.2px; margin-left: 6px; }
.action { position: relative; display: block; width: 20px; height: 22px; margin: 0 31px 0 17px; }
.action-count {
  position: absolute; right: -9px; bottom: -8px;
  width: 20px; height: 20px; border-radius: 50%;
  background: #222; border: 1px solid #bbb;
  font-size: 13px; line-height: 18px; text-align: center;
}
```
